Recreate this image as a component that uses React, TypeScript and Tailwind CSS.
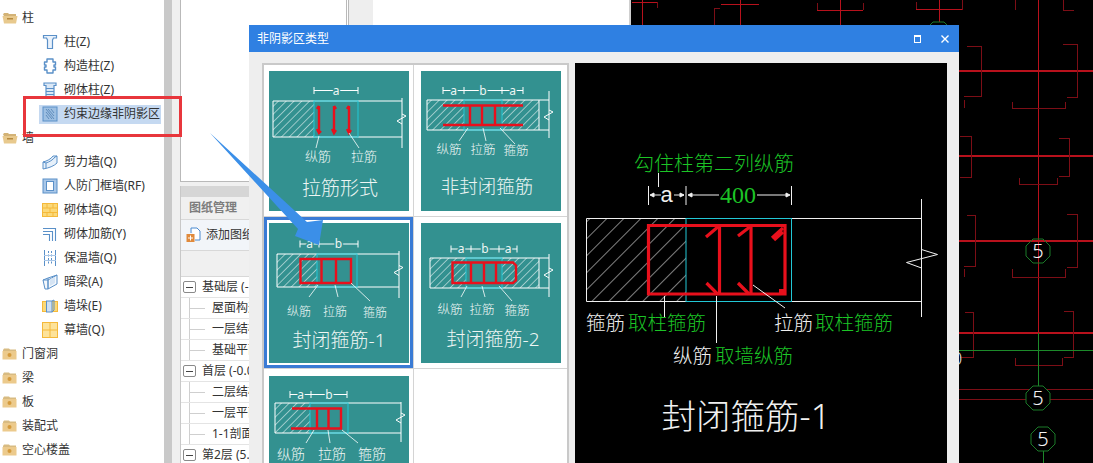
import type { ReactNode } from "react";

const TEAL = "#339190";
const LABEL = "#eef6f4";
const RED = "#e8101c";
const CYAN = "#22c8d6";

type Item = { label: string; icon: ReactNode; selected?: boolean };

function IconFrame({ children }: { children: ReactNode }) {
  return (
    <svg width="16" height="16" viewBox="0 0 16 16" fill="none" className="shrink-0">
      {children}
    </svg>
  );
}

const BLUE = "#5a90c8";
const YELLOW = "#f5b93a";

const columnIcon = (
  <IconFrame>
    <path d="M1.500 1.500h13v2.500h-3l-1 2v8.500h-5V6l-1-2h-3z" stroke={BLUE} strokeWidth="1.200" fill="#eaf2fb" />
  </IconFrame>
);
const tieColumnIcon = (
  <IconFrame>
    <path
      d="M5 1h6v3h2.500v3H12v2h1.500v3H11v3H5v-3H2.500V9H4V7H2.500V4H5z"
      stroke={BLUE}
      strokeWidth="1.400"
      strokeLinejoin="round"
      fill="#fff"
    />
  </IconFrame>
);
const masonryColumnIcon = (
  <IconFrame>
    <path d="M2 1h12v2.500h-2V15H4V3.500H2z" stroke={BLUE} strokeWidth="1.200" fill="#dbe8f6" />
    <path d="M4 6.500h8M4 9.500h8M4 12.500h8" stroke={BLUE} strokeWidth="1.200" />
  </IconFrame>
);
const boundaryIcon = (
  <IconFrame>
    <rect x="1" y="1" width="14" height="14" fill="#9dbfe2" stroke={BLUE} />
    <path d="M4 3l8 10M4 6l6 7M6 3l6 7M4 9l3 4M9 3l3 4" stroke="#4f7fb3" strokeWidth="0.800" />
  </IconFrame>
);
const shearWallIcon = (
  <IconFrame>
    <path d="M1 8c4-1 8-3 10-6h4v7c-3 3-8 5-14 6z" stroke={BLUE} fill="#e6f0fa" />
    <path d="M1 8l3 1c3-1 7-3 9-6l2-1M4 9v5" stroke={BLUE} />
  </IconFrame>
);
const frameWallIcon = (
  <IconFrame>
    <rect x="1" y="1" width="14" height="14" fill="#a9c7e8" stroke={BLUE} />
    <rect x="4.500" y="3.500" width="7" height="9" fill="#fff" stroke={BLUE} />
  </IconFrame>
);
const brickIcon = (
  <IconFrame>
    <rect x="0.500" y="1.500" width="15" height="13" fill="#fbd979" stroke={YELLOW} />
    <path d="M1 6h14M1 10.500h14M5 2v4M11 2v4M8 6v4.500M5 10.500v4M11 10.500v4" stroke={YELLOW} />
  </IconFrame>
);
const rebarIcon = (
  <IconFrame>
    <path d="M1 2.500h12.500V15M1 5.500h9.500V15M1 8.500h6.500V15" stroke={BLUE} strokeWidth="1.100" />
  </IconFrame>
);
const insulationIcon = (
  <IconFrame>
    <path d="M2.500 0v16M13.500 0v16" stroke={BLUE} />
    <path d="M6.500 1v14M9.500 1v14" stroke={BLUE} strokeDasharray="2 1.500" />
    <path d="M2 5.500h12M2 10.500h12" stroke="#a9c7e8" />
  </IconFrame>
);
const hiddenBeamIcon = (
  <IconFrame>
    <path d="M1 6l5-2 9-3v9l-9 5H3z" fill="#f4f8fc" stroke={BLUE} />
    <path d="M1 6h5l9-5M6 4v11M6 6v9" stroke={BLUE} />
    <path d="M8 5l5-2v6l-5 3z" fill="#d5e4f4" />
  </IconFrame>
);
const pierIcon = (
  <IconFrame>
    <rect x="0.500" y="3.500" width="15" height="10" fill="#fbd979" stroke={YELLOW} />
    <rect x="4.500" y="3" width="5.500" height="11" fill="#cfe0f3" stroke={BLUE} />
    <path d="M10 3l2-1v10l-2 2" stroke={BLUE} />
  </IconFrame>
);
const curtainWallIcon = (
  <IconFrame>
    <rect x="0.500" y="0.500" width="15" height="15" fill="#fde39a" stroke={YELLOW} />
    <path d="M8 1v14M1 8h14" stroke={YELLOW} />
  </IconFrame>
);

function OpenFolder() {
  return (
    <svg width="16" height="12" viewBox="0 0 16 12" className="shrink-0">
      <path d="M1 2.500l1-1.500h4l1 1h7v2H2z" fill="#d3b377" />
      <path d="M0.500 4h15l-1.500 7.500H2z" fill="#e8c98d" />
      <rect x="5" y="6" width="6" height="1.500" fill="#b68a3f" />
    </svg>
  );
}

function ClosedFolder() {
  return (
    <svg width="15" height="12" viewBox="0 0 15 12" className="shrink-0">
      <path d="M1 2l1-1.500h5L8 1.500h6V4H1z" fill="#d8bb82" />
      <rect x="0.500" y="3" width="14" height="8.500" fill="#ecca8c" />
      <circle cx="7.500" cy="7" r="2" fill="#d49a3c" />
    </svg>
  );
}

function GroupRow({ label, open }: { label: string; open?: boolean }) {
  return (
    <div className="flex h-6 items-center pl-[2px]">
      <span className="flex w-5 items-center">{open ? <OpenFolder /> : <ClosedFolder />}</span>
      <span>{label}</span>
    </div>
  );
}

function ItemRow({ label, icon, selected }: Item) {
  return (
    <div className="flex h-6 items-center">
      <div
        className={
          selected
            ? "ml-[39px] flex h-[19px] items-center gap-[6px] bg-[#c5d9f1] pl-[3px] pr-px"
            : "ml-[39px] flex h-[19px] items-center gap-[6px] pl-[3px]"
        }
      >
        {icon}
        <span>{label}</span>
      </div>
    </div>
  );
}

function ComponentTree() {
  return (
    <aside className="w-[164px] shrink-0 overflow-hidden bg-white pt-[6px] text-[12px] leading-none text-[#333]">
      <GroupRow label="柱" open />
      <ItemRow label="柱(Z)" icon={columnIcon} />
      <ItemRow label="构造柱(Z)" icon={tieColumnIcon} />
      <ItemRow label="砌体柱(Z)" icon={masonryColumnIcon} />
      <ItemRow label="约束边缘非阴影区" icon={boundaryIcon} selected />
      <GroupRow label="墙" open />
      <ItemRow label="剪力墙(Q)" icon={shearWallIcon} />
      <ItemRow label="人防门框墙(RF)" icon={frameWallIcon} />
      <ItemRow label="砌体墙(Q)" icon={brickIcon} />
      <ItemRow label="砌体加筋(Y)" icon={rebarIcon} />
      <ItemRow label="保温墙(Q)" icon={insulationIcon} />
      <ItemRow label="暗梁(A)" icon={hiddenBeamIcon} />
      <ItemRow label="墙垛(E)" icon={pierIcon} />
      <ItemRow label="幕墙(Q)" icon={curtainWallIcon} />
      <GroupRow label="门窗洞" />
      <GroupRow label="梁" />
      <GroupRow label="板" />
      <GroupRow label="装配式" />
      <GroupRow label="空心楼盖" />
    </aside>
  );
}

function FloorRow({ label }: { label: string }) {
  return (
    <div className="flex h-[21px] items-center border-b border-[#e4e4e4] pl-[2px] whitespace-nowrap">
      <span className="mr-[6px] flex h-[12px] w-[13px] items-center justify-center rounded-[2px] border border-[#8a8a8a] bg-white">
        <span className="h-px w-[7px] bg-[#444]" />
      </span>
      <span>{label}</span>
    </div>
  );
}

function DrawingRow({ label }: { label: string }) {
  return (
    <div className="flex h-[21px] items-center border-b border-[#e4e4e4] pl-[8px] whitespace-nowrap">
      <span className="mr-[7px] flex h-full w-[16px] items-center border-l border-[#cfcfcf]">
        <span className="w-full border-t border-[#cfcfcf]" />
      </span>
      <span>{label}</span>
    </div>
  );
}

function DrawingsPanel() {
  return (
    <div className="w-[177px] shrink-0 overflow-hidden bg-[#f0f0f0] pl-2">
      <div className="h-[182px] border border-t-0 border-r-[3px] border-double border-[#b9b9b9] bg-white" />
      <div className="mt-1 h-[277px] border-l border-[#c8c8c8] bg-white text-[12px] leading-none text-[#333]">
        <div className="h-[11px] bg-[#d6d6d6]" />
        <div className="flex h-[23px] items-center border-b border-[#d8d8d8] bg-[#f0f0f0] pl-[8px] font-bold text-[#7d7d7d]">
          图纸管理
        </div>
        <div className="flex h-[31px] items-center gap-[5px] border-b border-[#d8d8d8] bg-[#f2f5f9] pl-[5px] whitespace-nowrap">
          <svg width="15" height="16" viewBox="0 0 15 16" fill="none" className="shrink-0">
            <path d="M5 1h6l3 3v9H9" stroke="#4a8ad0" fill="#fff" />
            <path d="M5 1v5" stroke="#4a8ad0" />
            <rect x="0.500" y="7" width="8" height="8" fill="#e08a3c" />
            <path d="M4.500 8.500v5M2 11h5" stroke="#fff" />
          </svg>
          <span>添加图纸</span>
        </div>
        <div className="h-[26px] border-b border-[#d8d8d8] bg-[#f0f0f0]" />
        <FloorRow label="基础层 (-1.500)" />
        <DrawingRow label="屋面构造" />
        <DrawingRow label="一层结构" />
        <DrawingRow label="基础平面" />
        <FloorRow label="首层 (-0.050)" />
        <DrawingRow label="二层结构" />
        <DrawingRow label="一层平面" />
        <DrawingRow label="1-1剖面" />
        <FloorRow label="第2层 (5.000)" />
      </div>
    </div>
  );
}

function CadBackground() {
  const dim = "#7c0e16";
  const red = "#b8111c";
  const bubbles = [
    { x: 1038, y: 251, fill: "none" },
    { x: 1038, y: 398, fill: "#000" },
    { x: 1043, y: 439, fill: "#000" },
  ];
  return (
    <svg width="462" height="463" viewBox="631 0 462 463" fill="none" className="block font-light">
      <g stroke={red} shapeRendering="crispEdges">
        <path d="M632 2h25M642 0v25M721 4.500h38M740.500 0v25M817 10h46M840 0v25M916 9.500h46M939 0v22" />
        <path d="M959 71h134M959 155.500h134M959 240.500h134M959 332.500h134" strokeWidth="2" />
        <path d="M1038.500 0v333" />
      </g>
      <g stroke={dim} shapeRendering="crispEdges">
        <path d="M657 2v6M714 8h6M714 8v17M817 3v7M863 3v7M916 2v7M962 0v10" />
        <path d="M1015 0v10M1063 0v10H1074" />
        <path d="M967 46h14v50h-17M964 100v8M1063 44h14v53h-10M1012 102v6h53v-6" />
        <path d="M960 136h11v41h-11M1059 138h10v38h-10M1019 178v6h38v-6" />
        <path d="M967 215h8v51h-11M964 269v8M1067 214h10v53h-10M1012 269v8h53v-8" />
        <path d="M965 312h8v45h-13M1064 311h9v46h-9M1015 358v7h47v-7" />
        <path d="M959 389.500h134M959 399h134" />
      </g>
      <path d="M959 350.500h134M1038.500 333v53M1043 451v12" stroke="#1c8a2a" shapeRendering="crispEdges" />
      <g stroke="#1a7a28">
        <path d="M930 25l3-3h11l3 3" />
        {bubbles.map((b) => (
          <polygon
            key={b.y}
            points={`${b.x - 5},${b.y - 12} ${b.x + 5},${b.y - 12} ${b.x + 12},${b.y - 5} ${b.x + 12},${b.y + 5} ${b.x + 5},${b.y + 12} ${b.x - 5},${b.y + 12} ${b.x - 12},${b.y + 5} ${b.x - 12},${b.y - 5}`}
            fill={b.fill}
          />
        ))}
      </g>
      {bubbles.map((b) => (
        <text key={b.y} x={b.x} y={b.y + 7} fontSize="20" textAnchor="middle" fill="#f2f2f2">
          5
        </text>
      ))}
      <text x="957" y="365" fontSize="19" textAnchor="middle" fill="#d8d8d8">
        0
      </text>
    </svg>
  );
}

function Hatch({ id, x, y, w, h, gap = 5.500 }: { id: string; x: number; y: number; w: number; h: number; gap?: number }) {
  return (
    <>
      <defs>
        <pattern id={id} width={gap} height={gap} patternUnits="userSpaceOnUse" patternTransform="rotate(45)">
          <line x1="0" y1="0" x2="0" y2={gap} stroke="#fff" strokeWidth="1" />
        </pattern>
      </defs>
      <rect x={x} y={y} width={w} height={h} fill={`url(#${id})`} />
    </>
  );
}

// a dimension run: ticks at each x, a letter centred on every span
function DimRun({ y, xs, letters }: { y: number; xs: number[]; letters: string[] }) {
  return (
    <g>
      <line x1={xs[0]} x2={xs[xs.length - 1]} y1={y} y2={y} stroke="#fff" />
      {xs.map((x) => (
        <line key={x} x1={x} x2={x} y1={y - 3.500} y2={y + 3.500} stroke="#fff" />
      ))}
      {letters.map((l, i) => (
        <text
          key={i}
          x={(xs[i] + xs[i + 1]) / 2}
          y={y + 4}
          fontSize="12"
          textAnchor="middle"
          fill={LABEL}
          stroke={TEAL}
          strokeWidth="3"
          paintOrder="stroke"
        >
          {l}
        </text>
      ))}
    </g>
  );
}

function Shell({ x1, x2, y1, y2, top, bottom }: { x1: number; x2: number; y1: number; y2: number; top: number; bottom: number }) {
  return (
    <g stroke="#fff" fill="none">
      <path d={`M${x2} ${y1}H${x1}V${y2}H${x2}`} />
      <path d={`M${x2} ${top}V${bottom}`} />
      <path d={`M${x2} ${(y1 + y2) / 2 - 5}l4 2l-9 5l5 3`} />
    </g>
  );
}

function Caption({ x, y, size, children }: { x: number; y: number; size: number; children: string }) {
  return (
    <text x={x} y={y} fontSize={size} textAnchor="middle" fill={LABEL} className="font-light">
      {children}
    </text>
  );
}

function TileFrame({ children }: { children: ReactNode }) {
  return (
    <svg width="140" height="140" viewBox="0 0 140 140" fill="none" className="block shrink-0 bg-[#339190]">
      {children}
    </svg>
  );
}

function TieBarTile() {
  return (
    <TileFrame>
      <Hatch id="h1" x={4} y={30} w={41} h={36} />
      <Shell x1={4} x2={133} y1={30} y2={66} top={27} bottom={77} />
      <rect x="45" y="30" width="44" height="36" stroke={CYAN} />
      <DimRun y={19.500} xs={[45, 89]} letters={["a"]} />
      <g stroke={RED} strokeWidth="2.400">
        <path d="M50 35v26M48 38l2-3M48 58l2 4l2-2M65 35v26M63 58l2 4l2-3M67 38l-2-3M80 35v26M78 58l2 4l2-3M78 38l2-3" />
      </g>
      <path d="M50 65l-3 12M80 62l10 15" stroke="#fff" strokeWidth="0.800" />
      <Caption x={49} y={90} size={13}>纵筋</Caption>
      <Caption x={95} y={90} size={13}>拉筋</Caption>
      <Caption x={71} y={124} size={19}>拉筋形式</Caption>
    </TileFrame>
  );
}

function OpenStirrupTile() {
  return (
    <TileFrame>
      <Hatch id="h2a" x={6} y={29} w={37} h={30} />
      <Hatch id="h2b" x={81} y={29} w={37} h={30} />
      <Shell x1={6} x2={128} y1={29} y2={59} top={20} bottom={67} />
      <path d="M118 29v30" stroke="#fff" />
      <rect x="43" y="29" width="38" height="30" stroke={CYAN} />
      <DimRun y={19.500} xs={[22, 43, 81, 102]} letters={["a", "b", "a"]} />
      <path d="M22 34.500h80M22 54h80M49 34.500V54M61 34.500V54M74 34.500V54" stroke={RED} strokeWidth="2.400" />
      <path d="M47 57l-9 13M62 57l3 13M79 57l15 16" stroke="#fff" strokeWidth="0.800" />
      <Caption x={28} y={83} size={12.500}>纵筋</Caption>
      <Caption x={62} y={83} size={12.500}>拉筋</Caption>
      <Caption x={95} y={84} size={12.500}>箍筋</Caption>
      <Caption x={66} y={122} size={18.500}>非封闭箍筋</Caption>
    </TileFrame>
  );
}

function ClosedOneTile() {
  return (
    <TileFrame>
      <Hatch id="h3" x={8} y={31} w={40} h={33} />
      <Shell x1={8} x2={130} y1={31} y2={64} top={28} bottom={75} />
      <rect x="48" y="31" width="40" height="33" stroke={CYAN} />
      <DimRun y={21} xs={[31, 50, 89]} letters={["a", "b"]} />
      <path d="M31.500 36h50.500v24H31.500zM52.500 36v24M67 36v24" stroke={RED} strokeWidth="2.400" />
      <path d="M49 62l-9 12M66 62l3 12M82 60l19 18" stroke="#fff" strokeWidth="0.800" />
      <Caption x={30} y={93} size={12}>纵筋</Caption>
      <Caption x={66} y={93} size={12}>拉筋</Caption>
      <Caption x={106} y={94} size={12}>箍筋</Caption>
      <Caption x={70} y={124} size={19}>封闭箍筋-1</Caption>
    </TileFrame>
  );
}

function ClosedTwoTile() {
  return (
    <TileFrame>
      <Hatch id="h4a" x={9} y={35} w={36} h={30} />
      <Hatch id="h4b" x={81} y={35} w={37} h={30} />
      <Shell x1={9} x2={128} y1={35} y2={65} top={31} bottom={74} />
      <path d="M118 35v30" stroke="#fff" />
      <rect x="45" y="35" width="36" height="30" stroke={CYAN} />
      <DimRun y={26} xs={[30, 50, 78, 96]} letters={["a", "b", "a"]} />
      <path d="M31.500 39.500H92l3 3v15l-3 2.500H31.500zM50 39.500V60M63 39.500V60M75 39.500V60" stroke={RED} strokeWidth="2.400" />
      <path d="M46 63l-6 11M61 63l3 11M78 63l13 15" stroke="#fff" strokeWidth="0.800" />
      <Caption x={29} y={91} size={12.500}>纵筋</Caption>
      <Caption x={61} y={91} size={12.500}>拉筋</Caption>
      <Caption x={96} y={92} size={12.500}>箍筋</Caption>
      <Caption x={72} y={123} size={19}>封闭箍筋-2</Caption>
    </TileFrame>
  );
}

function HalfOpenTile() {
  return (
    <TileFrame>
      <Hatch id="h5" x={6} y={27} w={35} h={30} />
      <Shell x1={6} x2={132} y1={27} y2={57} top={26} bottom={66} />
      <rect x="41" y="27" width="38" height="30" stroke={CYAN} />
      <DimRun y={18.500} xs={[21, 42, 78]} letters={["a", "b"]} />
      <path d="M23 32.500h49v20H22M48 32.500v20M59.500 32.500v20" stroke={RED} strokeWidth="2.400" />
      <path d="M45 54l-8 13M59 54l2 13M73 54l16 13" stroke="#fff" strokeWidth="0.800" />
      <Caption x={22} y={83} size={14}>纵筋</Caption>
      <Caption x={63} y={83} size={14}>拉筋</Caption>
      <Caption x={103} y={83} size={14}>箍筋</Caption>
    </TileFrame>
  );
}

function TypeList() {
  return (
    <div className="h-[420px] w-[307px] shrink-0 overflow-hidden border-2 border-b-0 border-[#c9c9c9] bg-white">
      <div className="grid grid-cols-[150px_153px] grid-rows-[152px_152px_152px]">
        <div className="flex items-center justify-center border-r border-b border-[#d4d4d4]">
          <TieBarTile />
        </div>
        <div className="flex items-center justify-center border-b border-[#d4d4d4]">
          <OpenStirrupTile />
        </div>
        <div className="border-r border-b border-[#d4d4d4]">
          <div className="flex h-full items-center justify-center border-[3px] border-[#3a7bd5]">
            <ClosedOneTile />
          </div>
        </div>
        <div className="flex items-center justify-center border-b border-[#d4d4d4]">
          <ClosedTwoTile />
        </div>
        <div className="flex items-start justify-center border-r border-[#d4d4d4] pt-[7px]">
          <HalfOpenTile />
        </div>
        <div />
      </div>
    </div>
  );
}

function DetailPreview() {
  const white = "#f0f0f0";
  const green = "#1cc426";
  return (
    <div className="h-[400px] w-[372px] shrink-0 bg-black">
      <svg width="372" height="400" viewBox="0 0 372 400" fill="none" className="block font-light">
        <text x="139" y="108" fontSize="20" textAnchor="middle" fill={green}>勾住柱第二列纵筋</text>
        <path d="M83.500 110v14" stroke={white} />
        <path
          d="M73.500 123v19M111 123v19M216.500 123v19M76 132h10M99 132h10M114 132h30M182 132h31"
          stroke={white}
        />
        <path d="M75 132l4-2v4zM109 132l-4-2v4zM113 132l4-2v4zM215 132l-4-2v4z" fill={white} stroke={white} />
        <text x="91.500" y="139" fontSize="22" textAnchor="middle" fill={white} className="font-['Liberation_Sans',sans-serif]">a</text>
        <text x="163" y="140" fontSize="24" textAnchor="middle" fill={green} className="font-['Liberation_Serif',serif]">400</text>

        <Hatch id="h6" x={12} y={155} w={99} h={84} gap={12} />
        <path d="M346.500 155.500H11.500V238.500H346.500M346.500 136v118" stroke={white} />
        <rect x="111" y="155.500" width="105.500" height="83" stroke={CYAN} />
        <path d="M346.500 186.500l16 5l-31 8l15 5.500" stroke={white} />

        <g stroke={RED} strokeWidth="3.200">
          <path d="M73.500 162.500H210V231H73.500zM144.500 162.500V231M176 162.500V231" />
          <path d="M144 163l-13 11M176 163l-13 10M208 165l-11 10M208 169l-9 8M131.500 220l11 11M163 220l11 11" />
        </g>
        <rect x="204" y="226" width="6" height="6" fill={RED} />

        <path d="M89.500 233v21M141.500 233v47M178 222l32 23" stroke={white} />

        <text x="11" y="267" fontSize="19.500" fill={white}>箍筋</text>
        <text x="53" y="267" fontSize="19.500" fill={green}>取柱箍筋</text>
        <text x="199" y="267" fontSize="19.500" fill={white}>拉筋</text>
        <text x="240" y="267" fontSize="19.500" fill={green}>取柱箍筋</text>
        <text x="98" y="300" fontSize="19.500" fill={white}>纵筋</text>
        <text x="140" y="300" fontSize="19.500" fill={green}>取墙纵筋</text>
        <text x="171" y="366" fontSize="34.500" textAnchor="middle" fill={white}>封闭箍筋-1</text>
      </svg>
    </div>
  );
}

function TypeDialog() {
  return (
    <section className="absolute top-[25px] left-[249px] flex h-[438px] w-[710px] flex-col bg-[#eeeeee]">
      <header className="flex h-[27px] shrink-0 items-center bg-[#2f80e2] pr-[9px] pl-2 text-[12px] leading-none text-white">
        <span>非阴影区类型</span>
        <span className="ml-auto h-[8px] w-[7px] border border-t-2 border-white" />
        <svg width="10" height="10" viewBox="0 0 10 10" className="ml-[19px]">
          <path d="M1.500 1.500l7 7M8.500 1.500l-7 7" stroke="#fff" strokeWidth="1.400" />
        </svg>
      </header>
      <div className="flex flex-1 gap-[6px] pt-[11px] pl-[13px]">
        <TypeList />
        <DetailPreview />
      </div>
    </section>
  );
}

export default function App() {
  return (
    <div className="relative flex h-[463px] w-[1093px] overflow-hidden bg-white font-['Noto_Sans','Noto_Sans_CJK_SC',sans-serif]">
      <ComponentTree />
      <div className="w-2 shrink-0 bg-[#c9c9c9]" />
      <DrawingsPanel />
      <div className="w-6 shrink-0 bg-[#eeeeee]" />
      <div className="w-[258px] shrink-0 border-r-2 border-[#cfcfcf] bg-white" />
      <div className="flex-1 bg-black">
        <CadBackground />
      </div>

      <TypeDialog />

      {/* callout over the tree row */}
      <div className="absolute top-[96px] left-[23px] h-[41px] w-[159px] border-[3px] border-[#e8363c]" />

      {/* arrow from the tree row to the selected type */}
      <svg width="130" height="125" viewBox="205 128 130 125" className="pointer-events-none absolute top-[128px] left-[205px]">
        <polygon points="210,133 307,222 323,220 319,245 295,236 298,229" fill="#3b8fe8" />
      </svg>
    </div>
  );
}
